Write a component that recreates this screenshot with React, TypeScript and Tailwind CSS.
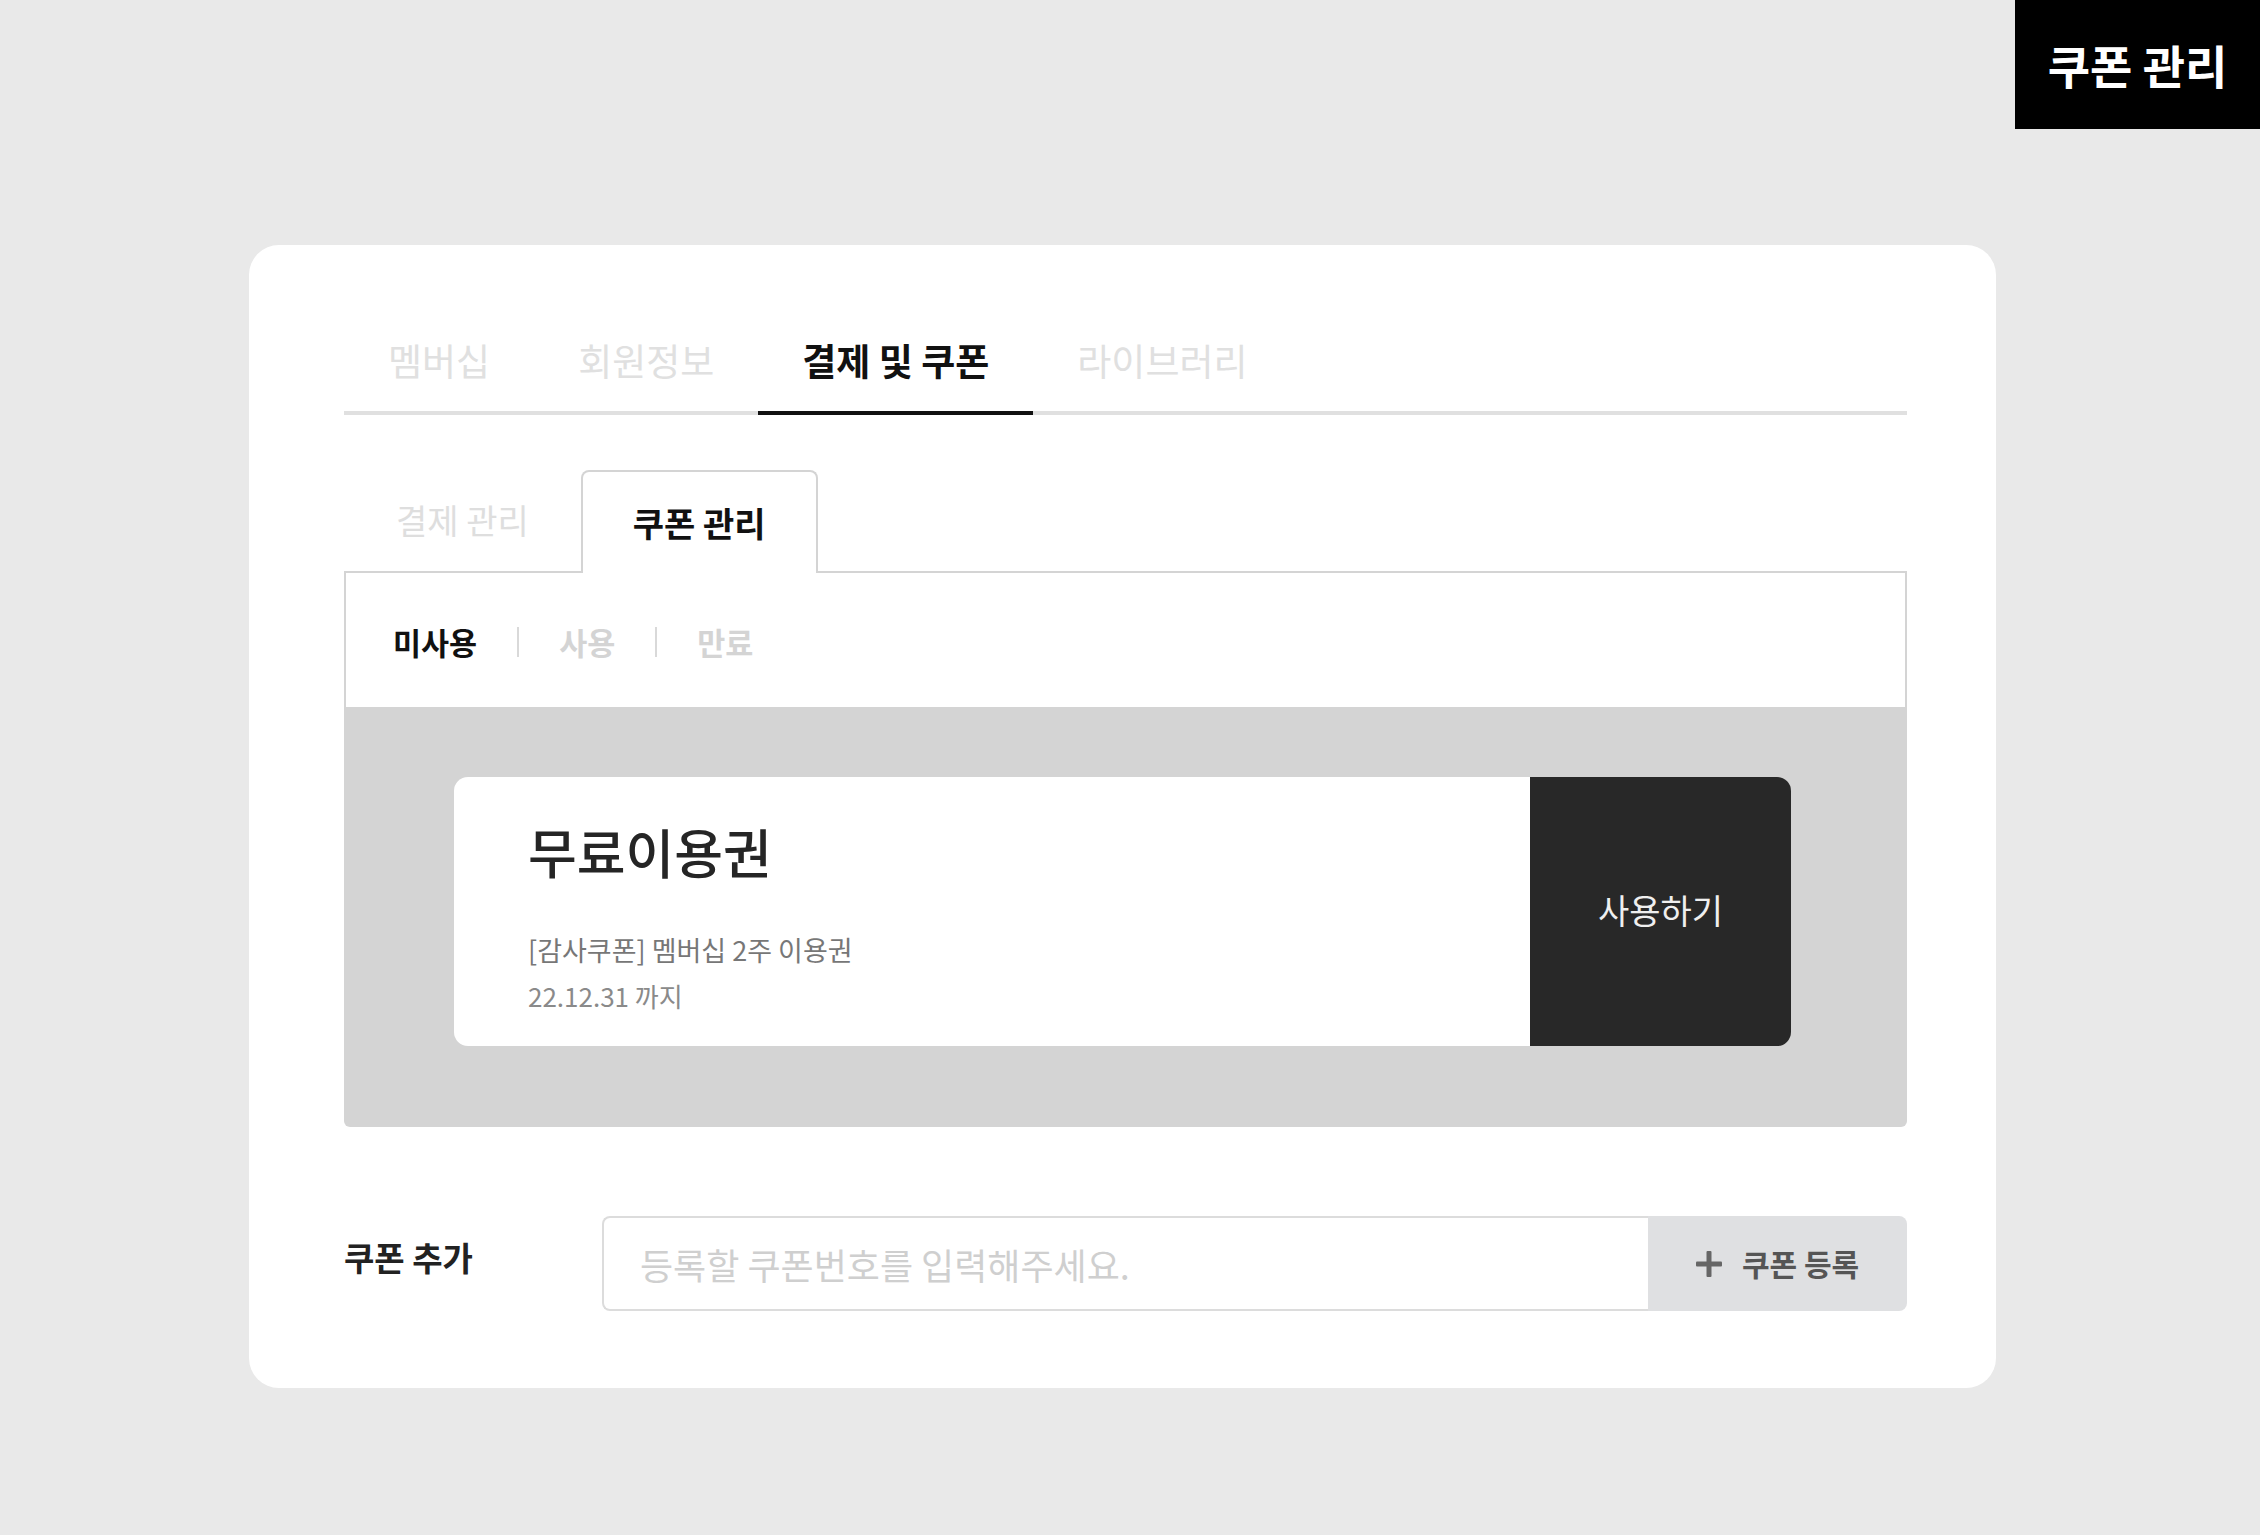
import { useState } from 'react';

const mainTabs = ['멤버십', '회원정보', '결제 및 쿠폰', '라이브러리'];
const filters = ['미사용', '사용', '만료'];

export default function App() {
  const [tab, setTab] = useState(2);
  const [subTab, setSubTab] = useState(1);
  const [filter, setFilter] = useState(0);
  const [code, setCode] = useState('');

  return (
    <div className="min-h-screen w-full bg-[#e9e9e9] font-['Noto_Sans_CJK_KR','Noto_Sans',sans-serif] pb-[147px]">
      {/* 상단 라벨 */}
      <div className="flex justify-end">
        <div className="w-[245px] h-[129px] bg-black flex items-center justify-center text-white text-[46px] font-bold">
          쿠폰 관리
        </div>
      </div>

      <div className="ml-[249px] mt-[116px] w-[1747px] h-[1143px] rounded-[30px] bg-white pt-[93px] pl-[95px] pr-[89px]">
        {/* 메인 탭 */}
        <div className="flex border-b-4 border-[#e0e0e0]">
          {mainTabs.map((t, i) => (
            <button
              key={t}
              onClick={() => setTab(i)}
              className={`px-[44px] pb-[29px] text-[37px] leading-[44px] -mb-[4px] border-b-4 ${
                tab === i ? 'border-[#111] text-[#111] font-bold' : 'border-transparent text-[#e0e0e0]'
              }`}
            >
              {t}
            </button>
          ))}
        </div>

        {/* 서브 탭 */}
        <div className="mt-[53px] flex items-end">
          {['결제 관리', '쿠폰 관리'].map((t, i) => (
            <button
              key={t}
              onClick={() => setSubTab(i)}
              className={`h-[103px] flex items-center justify-center text-[34px] ${
                subTab === i
                  ? 'relative z-10 -mb-[2px] px-[50px] bg-white border-2 border-b-0 border-[#d4d4d4] rounded-t-[8px] font-bold text-[#111]'
                  : 'px-[52px] text-[#dedede]'
              }`}
            >
              {t}
            </button>
          ))}
        </div>

        <div className="border-x-2 border-t-2 border-[#d4d4d4] h-[136px] pt-[4px] pl-[47px] flex items-center gap-[40px]">
          {filters.map((f, i) => (
            <div key={f} className="flex items-center gap-[40px]">
              {i > 0 && <div className="w-[2px] h-[30px] bg-[#d9d9d9]" />}
              <button
                onClick={() => setFilter(i)}
                className={`text-[30.5px] font-bold leading-[36px] ${filter === i ? 'text-[#111]' : 'text-[#d4d4d4]'}`}
              >
                {f}
              </button>
            </div>
          ))}
        </div>

        {/* 쿠폰 목록 */}
        <div className="bg-[#d4d4d4] rounded-b-[6px] pt-[70px] pb-[81px] pl-[110px] pr-[116px]">
          <div className="flex h-[269px] rounded-[14px] overflow-hidden">
            <div className="flex-1 bg-white pl-[74px] pt-[44px]">
              <div className="text-[53px] leading-[60px] font-medium text-[#252525]">무료이용권</div>
              <div className="mt-[51px] text-[27px] leading-[36px] text-[#777]">[감사쿠폰] 멤버십 2주 이용권</div>
              <div className="mt-[10px] text-[26px] leading-[36px] text-[#8a8a8a]">22.12.31 까지</div>
            </div>
            <button className="w-[261px] bg-[#282828] flex items-center justify-center text-[34px] text-[#efefef] pb-[4px]">
              사용하기
            </button>
          </div>
        </div>

        {/* 쿠폰 추가 */}
        <div className="mt-[89px] flex items-center">
          <div className="w-[258px] text-[33px] font-bold text-[#222] -mt-[11px]">쿠폰 추가</div>
          <div className="flex-1 flex h-[95px]">
            <input
              value={code}
              onChange={(e) => setCode(e.target.value)}
              placeholder="등록할 쿠폰번호를 입력해주세요."
              className="flex-1 min-w-0 h-full border-2 border-r-0 border-[#dcdcdc] rounded-l-[8px] pl-[36px] text-[36px] text-[#333] placeholder:text-[#cfcfcf] outline-none"
            />
            <button className="w-[259px] h-full bg-[#dfe0e2] rounded-r-[8px] flex items-center justify-center gap-[20px] text-[30px] font-bold text-[#555]">
              <svg width="26" height="26" viewBox="0 0 26 26" fill="#666">
                <rect x="10.5" y="0" width="5" height="26" rx="1" />
                <rect x="0" y="10.5" width="26" height="5" rx="1" />
              </svg>
              쿠폰 등록
            </button>
          </div>
        </div>
      </div>
    </div>
  );
}
